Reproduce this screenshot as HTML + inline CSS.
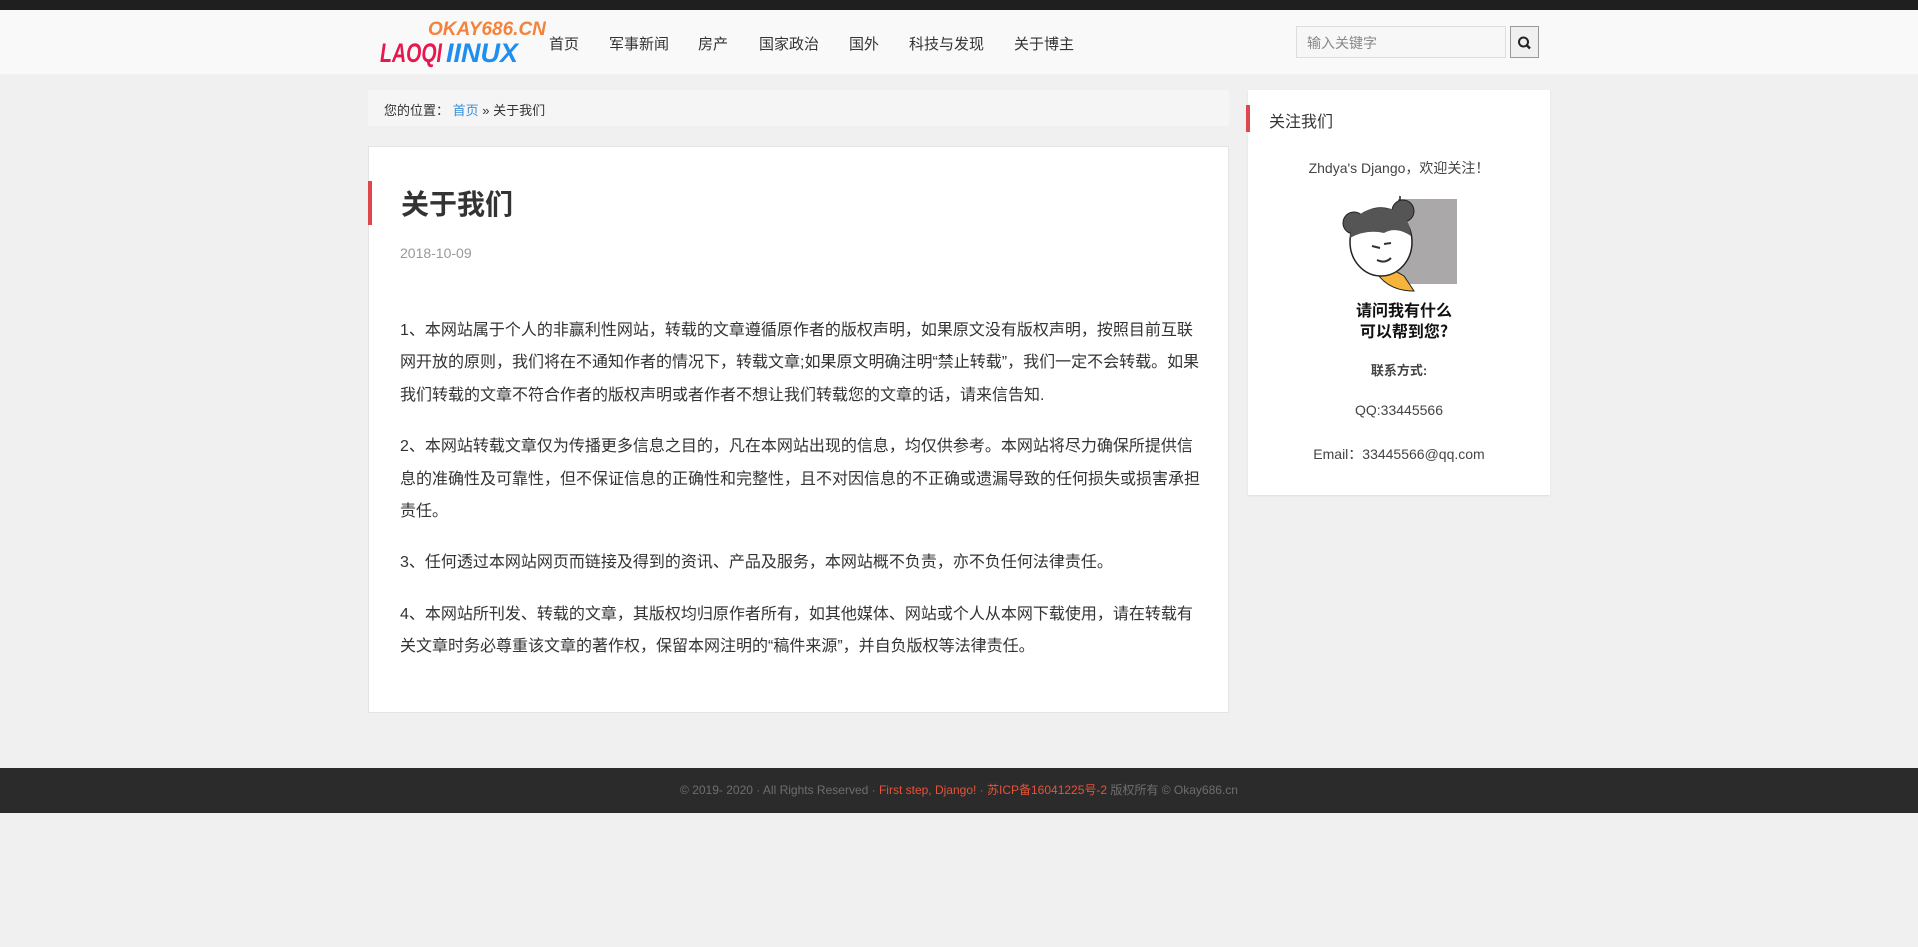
<!DOCTYPE html>
<html><head><meta charset="utf-8"><style>
*{margin:0;padding:0;box-sizing:border-box}
body{width:1918px;height:947px;background:#f0f0f0;font-family:"Liberation Sans","Noto Sans CJK SC",sans-serif;color:#333;position:relative;overflow:hidden}
.top{position:absolute;left:0;top:0;width:1918px;height:10px;background:#1f1f1f}
.hdr{position:absolute;left:0;top:10px;width:1918px;height:64px;background:#f9f9f9}
.logo{position:absolute;left:380px;top:18px;width:170px;height:50px}
.nav{position:absolute;top:33px;font-size:15px;color:#333}
.search{position:absolute;left:1296px;top:26px;width:210px;height:32px;border:1px solid #ddd;background:#f7f7f7;font-size:14px;color:#888;padding:6px 10px}
.sbtn{position:absolute;left:1510px;top:26px;width:29px;height:32px;border:1px solid #999;background:#f0f0f0}
.crumb{position:absolute;left:368px;top:90px;width:861px;height:36px;background:#f5f5f5;font-size:13px;padding:10px 16px;color:#333}
.crumb a{color:#3a8fd6;text-decoration:none}
.card{position:absolute;left:368px;top:146px;width:861px;height:567px;background:#fff;border:1px solid #e4e4e4}
.rbar{position:absolute;background:#e0474c;width:4px}
h1{position:absolute;left:32px;top:38px;font-size:28px;font-weight:bold;color:#333;line-height:40px}
.date{position:absolute;left:31px;top:98px;font-size:14px;color:#999}
.body{position:absolute;left:31px;top:168px;width:802px;font-size:16px;line-height:32.4px;color:#333}
.body p{margin-bottom:19px}
.side{position:absolute;left:1248px;top:90px;width:302px;height:405px;background:#fff;box-shadow:0 1px 2px rgba(0,0,0,.08)}
.side .t{position:absolute;left:21px;top:18px;font-size:16px;color:#333}
.c{position:absolute;left:0;width:302px;text-align:center;font-size:14px;color:#444}
.foot{position:absolute;left:0;top:768px;width:1918px;height:45px;background:#2b2b2b;text-align:center;font-size:12px;color:#6e6e6e;line-height:45px}
.foot span{color:#e5533a}
</style></head><body>
<div class="top"></div>
<div class="hdr"></div>
<svg class="logo" viewBox="0 0 170 50">
<text x="48" y="17" font-family="Liberation Sans" font-style="italic" font-weight="bold" font-size="19" fill="#f5823a">OKAY686.CN</text>
<text x="0" y="44" font-family="Liberation Sans" font-style="italic" font-weight="bold" font-size="27" fill="#e8174f" textLength="62" lengthAdjust="spacingAndGlyphs">LAOQI</text>
<text x="66" y="44" font-family="Liberation Sans" font-style="italic" font-weight="bold" font-size="27" fill="#1e8ef0" textLength="72" lengthAdjust="spacingAndGlyphs">IINUX</text>
</svg>
<div class="nav" style="left:549px">首页</div>
<div class="nav" style="left:609px">军事新闻</div>
<div class="nav" style="left:698px">房产</div>
<div class="nav" style="left:759px">国家政治</div>
<div class="nav" style="left:849px">国外</div>
<div class="nav" style="left:909px">科技与发现</div>
<div class="nav" style="left:1014px">关于博主</div>
<div class="search">输入关键字</div>
<div class="sbtn"><svg width="27" height="30" viewBox="0 0 27 30"><circle cx="12.5" cy="15" r="4.5" fill="none" stroke="#222" stroke-width="2"/><path d="M16 18.5l3 3" stroke="#222" stroke-width="2.4"/></svg></div>
<div class="crumb">您的位置： <a>首页</a> » 关于我们</div>
<div class="card">
<div class="rbar" style="left:-1px;top:34px;height:44px"></div>
<h1>关于我们</h1>
<div class="date">2018-10-09</div>
<div class="body">
<p>1、本网站属于个人的非赢利性网站，转载的文章遵循原作者的版权声明，如果原文没有版权声明，按照目前互联网开放的原则，我们将在不通知作者的情况下，转载文章;如果原文明确注明“禁止转载”，我们一定不会转载。如果我们转载的文章不符合作者的版权声明或者作者不想让我们转载您的文章的话，请来信告知.</p>
<p>2、本网站转载文章仅为传播更多信息之目的，凡在本网站出现的信息，均仅供参考。本网站将尽力确保所提供信息的准确性及可靠性，但不保证信息的正确性和完整性，且不对因信息的不正确或遗漏导致的任何损失或损害承担责任。</p>
<p>3、任何透过本网站网页而链接及得到的资讯、产品及服务，本网站概不负责，亦不负任何法律责任。</p>
<p>4、本网站所刊发、转载的文章，其版权均归原作者所有，如其他媒体、网站或个人从本网下载使用，请在转载有关文章时务必尊重该文章的著作权，保留本网注明的“稿件来源”，并自负版权等法律责任。</p>
</div>
</div>
<div class="side">
<div class="rbar" style="left:-2px;top:15px;height:27px"></div>
<div class="t">关注我们</div>
<div class="c" style="top:68px">Zhdya's Django，欢迎关注！</div>
<svg style="position:absolute;left:89px;top:106px" width="137" height="153" viewBox="0 0 137 153">
<rect x="61" y="3" width="59" height="85" fill="#aaa8a8"/>
<line x1="63" y1="0" x2="63" y2="40" stroke="#222" stroke-width="1.5"/>
<path d="M32 60 q10 35 45 35 l-10 -15z" fill="#f6b43c" stroke="#222"/>
<circle cx="17" cy="27" r="11" fill="#555" stroke="#222"/>
<circle cx="66" cy="15" r="11" fill="#555" stroke="#222"/>
<ellipse cx="44" cy="46" rx="31" ry="34" fill="#fff" stroke="#222" stroke-width="1.5"/>
<path d="M13 42 q2 -30 31 -30 q28 0 30 28 q-15 -10 -27 -3 q-18 -4 -34 5z" fill="#555"/>
<path d="M35 50 l8 2 M47 48 l7 -1 M40 64 q8 4 14 -2" stroke="#333" stroke-width="2" fill="none"/>
<text x="67" y="120" text-anchor="middle" font-family="Noto Sans CJK SC" font-weight="bold" font-size="16" fill="#111">请问我有什么</text>
<text x="67" y="141" text-anchor="middle" font-family="Noto Sans CJK SC" font-weight="bold" font-size="16" fill="#111">可以帮到您?</text>
</svg>
<div class="c" style="top:270px;font-weight:bold;font-size:13px">联系方式:</div>
<div class="c" style="top:312px">QQ:33445566</div>
<div class="c" style="top:354px">Email：33445566@qq.com</div>
</div>
<div class="foot">© 2019- 2020 · All Rights Reserved · <span>First step, Django!</span> · <span>苏ICP备16041225号-2</span> 版权所有 © Okay686.cn</div>
</body></html>
